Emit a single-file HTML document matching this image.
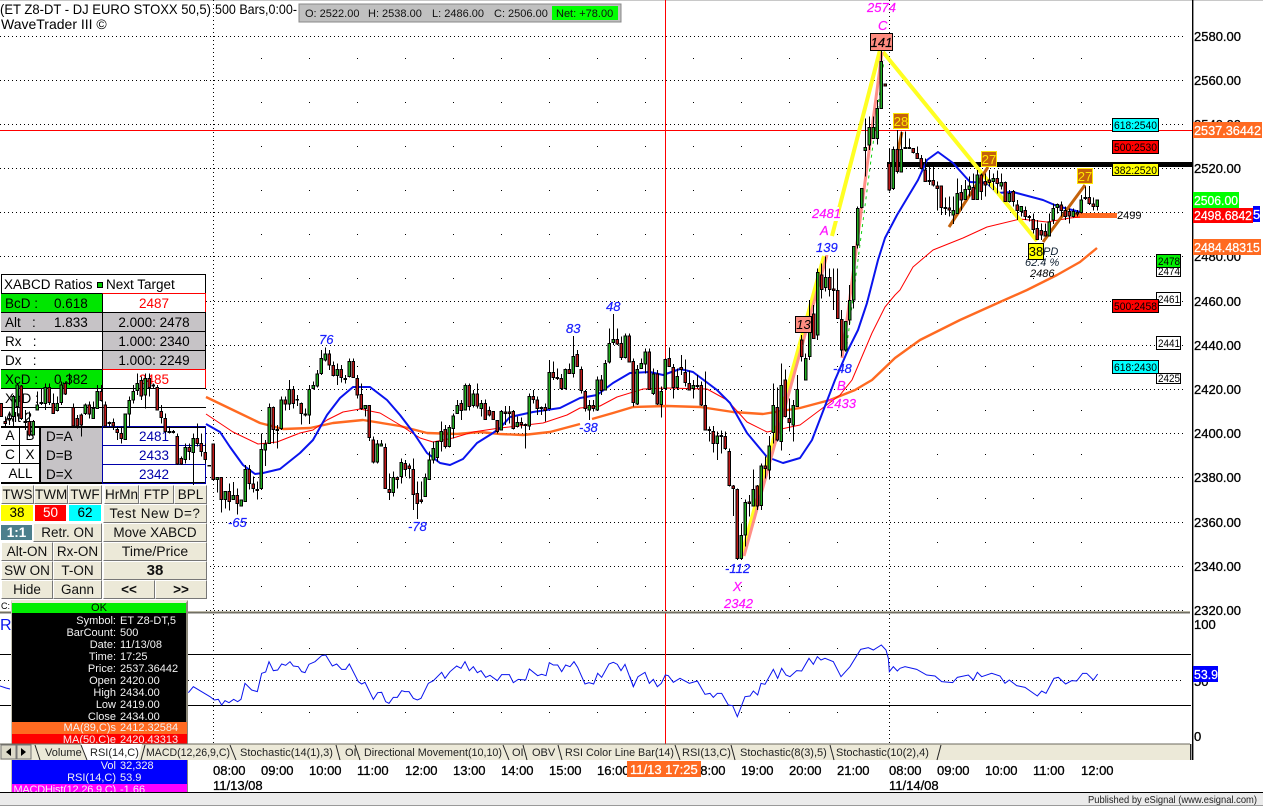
<!DOCTYPE html>
<html><head><meta charset="utf-8"><title>WaveTrader</title>
<style>
html,body{margin:0;padding:0;background:#fff;width:1263px;height:806px;overflow:hidden}
body{position:relative;font-family:"Liberation Sans",sans-serif;color:#000}
svg{position:absolute;left:0;top:0}
svg text{font-family:"Liberation Sans",sans-serif}
.a{position:absolute;white-space:nowrap;box-sizing:border-box}
.r{font-size:13.5px;height:20px;line-height:19px;border:1px solid #000;border-left:0;border-right:0}
.c{text-align:center}
.bt{position:absolute;box-sizing:border-box;background:#ece9d8;border:1px solid;border-color:#fff #777 #777 #fff;text-align:center;font-size:13.5px;line-height:17px;white-space:nowrap;overflow:hidden;color:#111}
.col{position:absolute;box-sizing:border-box;text-align:center;font-size:13.5px;line-height:16px}
.i{position:absolute;left:12px;width:175px;height:12px;font-size:11px;line-height:12px;color:#f2f2f2;white-space:nowrap}
.i s{text-decoration:none;position:absolute;right:71px}
.i u{text-decoration:none;position:absolute;left:108px}
.t{font-size:11px;fill:#222}
.ax{font-size:13px;fill:#000;stroke:#000;stroke-width:.3px}
.m{font-size:13px;font-style:italic;fill:#ff10ff;stroke:#ff10ff;stroke-width:.2px}
.b{font-size:13px;font-style:italic;fill:#1a20ff;stroke:#1a20ff;stroke-width:.2px}
.k{font-size:11px;fill:#000}
</style></head><body>

<!-- XABCD panel rows beneath the chart -->
<div class="a" style="left:1px;top:274px;width:205px;height:20px;border:1px solid #000;border-bottom:0;font-size:13.5px;line-height:20px;padding-left:2px">XABCD Ratios<span class="a" style="left:95px;top:7px;width:6px;height:6px;background:#0c0;border:1px solid #000"></span><span class="a" style="left:104px;top:0">Next Target</span></div>
<div class="a r" style="left:1px;top:293px;width:101px;background:#00e600;padding-left:4px">BcD :<span class="a" style="left:53px">0.618</span></div>
<div class="a r c" style="left:102px;top:293px;width:104px;color:#f00;border-color:#f00 #000 #000;border-left:1px solid #000;border-right:1px solid #f00">2487</div>
<div class="a r" style="left:1px;top:312px;width:101px;background:#c6c3c6;padding-left:4px">Alt &nbsp; :<span class="a" style="left:53px">1.833</span></div>
<div class="a r c" style="left:102px;top:312px;width:104px;background:#c6c3c6;border-left:1px solid #000;border-right:1px solid #000">2.000: 2478</div>
<div class="a r" style="left:1px;top:331px;width:101px;padding-left:4px">Rx &nbsp; :</div>
<div class="a r c" style="left:102px;top:331px;width:104px;background:#c6c3c6;border-left:1px solid #000;border-right:1px solid #000">1.000: 2340</div>
<div class="a r" style="left:1px;top:350px;width:101px;padding-left:4px">Dx &nbsp; :</div>
<div class="a r c" style="left:102px;top:350px;width:104px;background:#c6c3c6;border-left:1px solid #000;border-right:1px solid #000">1.000: 2249</div>
<div class="a r" style="left:1px;top:369px;width:101px;background:#00e600;padding-left:4px">XcD :<span class="a" style="left:53px">0.382</span></div>
<div class="a r c" style="left:102px;top:369px;width:104px;color:#f00;border-color:#f00 #000 #000;border-left:1px solid #000;border-right:1px solid #f00">2485</div>
<div class="a r" style="left:1px;top:388px;width:101px;padding-left:4px">XaD :</div>
<div class="a r" style="left:102px;top:388px;width:104px;border-left:1px solid #000"></div>
<div class="a r" style="left:1px;top:407px;width:101px;padding-left:4px">Alt 2</div>
<div class="a r" style="left:102px;top:407px;width:104px;border-left:1px solid #000"></div>
<div class="a" style="left:1px;top:426px;width:205px;height:58px;border-top:2px solid #000;border-bottom:2px solid #000"></div>
<div class="a" style="left:1px;top:426px;width:19px;height:20px;border-right:1px solid #000;border-bottom:1px solid #000;font-size:13.5px;line-height:20px;text-align:center">A</div>
<div class="a" style="left:20px;top:426px;width:20px;height:20px;border-bottom:1px solid #000;font-size:13.5px;line-height:20px;text-align:center">B</div>
<div class="a" style="left:1px;top:445px;width:19px;height:19px;border-right:1px solid #000;border-bottom:1px solid #000;font-size:13.5px;line-height:20px;text-align:center">C</div>
<div class="a" style="left:20px;top:445px;width:20px;height:19px;border-bottom:1px solid #000;font-size:13.5px;line-height:20px;text-align:center">X</div>
<div class="a" style="left:1px;top:464px;width:39px;height:19px;font-size:13.5px;line-height:20px;text-align:center">ALL</div>
<div class="a" style="left:39px;top:426px;width:63px;height:58px;background:#c6c3c6;border-left:2px solid #000;border-top:2px solid #000;border-bottom:2px solid #000;font-size:13.5px"><span class="a" style="left:5px;top:0;line-height:18px">D=A</span><span class="a" style="left:5px;top:19px;line-height:18px">D=B</span><span class="a" style="left:5px;top:38px;line-height:18px">D=X</span></div>
<div class="a c" style="left:102px;top:426px;width:104px;height:20px;border:1px solid #00a;color:#00a;font-size:13.5px;line-height:19px">2481</div>
<div class="a c" style="left:102px;top:445px;width:104px;height:20px;border:1px solid #00a;color:#00a;font-size:13.5px;line-height:19px">2433</div>
<div class="a c" style="left:102px;top:464px;width:104px;height:20px;border:1px solid #00a;color:#00a;font-size:13.5px;line-height:19px">2342</div>

<svg width="1263" height="806" viewBox="0 0 1263 806">
<rect x="0" y="0" width="1263" height="1" fill="#c8c8c8"/>
<!-- grid -->
<g fill="none" stroke="#000" shape-rendering="crispEdges">
<path stroke-dasharray="1 3" d="M206 36.5H1185M206 80.5H1185M206 124.5H1185M206 168.5H1185M206 212.5H1185M206 256.5H1185M206 301.5H1185M206 345.5H1185M206 389.5H1185M206 433.5H1185M206 477.5H1185M206 522.5H1185M206 566.5H1185M206 610.5H1185"/>
<path stroke-dasharray="1 3" d="M0 36.5H206M0 80.5H206M0 124.5H206M0 168.5H206M0 212.5H206M0 256.5H206"/>
<path stroke-dasharray="1 43" d="M261.5 58V600M309.5 58V600M357.5 58V600M405.5 58V600M453.5 58V600M501.5 58V600M549.5 58V600M597.5 58V600M645.5 58V600M693.5 58V600M741.5 58V600M789.5 58V600M837.5 58V600M937.5 58V600M985.5 58V600M1033.5 58V600M1081.5 58V600"/>
<path stroke-dasharray="1 3" d="M213.5 0V610M889.5 0V610M213.5 614V743M889.5 614V743"/>
<path stroke-dasharray="1 63" d="M261.5 648V720M309.5 648V720M357.5 648V720M405.5 648V720M453.5 648V720M501.5 648V720M549.5 648V720M597.5 648V720M645.5 648V720M693.5 648V720M741.5 648V720M789.5 648V720M837.5 648V720M937.5 648V720M985.5 648V720M1033.5 648V720M1081.5 648V720"/>
<path stroke-dasharray="1 3" d="M0 680.5H1183"/>
<path d="M0 654.5H1191M0 705.5H1191"/>
<path stroke="#f00" d="M665.5 0V745M0 130.5H1192"/>
</g>
<!-- thick target lines -->
<rect x="887" y="162" width="305" height="5" fill="#000"/>
<rect x="1075" y="213" width="42" height="5" fill="#ff6a21"/>
<!-- moving averages -->
<g fill="none" stroke-linejoin="round">
<polyline stroke="#ff6a21" stroke-width="2.4" points="206,397 233,410 260,423 283,429 310,428 333,423 363,420 400,426 427,433 457,434 480,432 500,434 523,435 550,432 580,424"/>
<polyline stroke="#ff6a21" stroke-width="2.4" points="592,419 613,413 633,407 667,406 700,407 733,412 763,414 800,408 830,400 855,390 872,380 895,358 920,340 960,320 1000,302 1027,290 1057,275 1080,262 1097,248"/>
<polyline stroke="#f00" stroke-width="1" points="206,414 233,432 258,444 277,442 300,433 313,430 327,420 343,412 360,409 380,413 400,425 420,438 433,442 453,438 473,432 493,429 500,428 543,423 567,415 580,408 600,406 617,397 643,389 667,388 707,389 727,400 747,422 767,432 800,425 820,410 840,395 852,380 872,333 885,307 895,295 900,290 913,267 933,250 963,238 987,227 1020,219 1047,222 1070,218 1080,217"/>
<polyline stroke="#0a14ee" stroke-width="2" points="206,424 220,432 230,447 243,465 255,474 263,473 280,469 300,453 313,440 327,415 340,398 353,387 370,387 387,400 400,415 413,432 427,453 440,463 450,465 463,459 477,443 493,433 500,428 510,417 533,412 560,408 580,398 597,395 613,383 630,373 650,372 663,375 680,369 693,372 717,390 730,403 747,433 767,457 783,463 800,458 812,440 835,380 848,350 858,330 867,303 878,260 885,238 897,215 918,180 927,160 938,152 953,163 970,182 987,183 997,193 1013,192 1043,200 1057,206 1080,212"/>
</g>
<!-- XABCD pattern -->
<g fill="none">
<path stroke="#ffff22" stroke-width="4" d="M741 558L824 256M832 236L880 50M883 52L1037 241"/>
<path stroke="#ff9088" stroke-width="3" d="M744 556L827 255M842 358L882 52"/>
<path stroke="#10d010" stroke-width="1" stroke-dasharray="3 4" d="M846 352L884 60"/>
<path stroke="#c4620c" stroke-width="3" d="M898 150L902 132M949 227L988 167M1043 242L1085 185"/>
</g>

<!-- candles: wicks then bodies -->
<g shape-rendering="crispEdges" stroke="#000" stroke-width="3">
<g transform="translate(0,270) scale(.33333)">
<path fill="none" d="M4 400V440M16 440V470M28 425V465M40 375V470M52 340V440M64 345V450M76 420V480M88 425V500M100 450V495M112 365V420M124 355V405M136 340V420M148 340V405M160 370V430M172 380V425M184 335V405M196 335V375M208 310V345M220 400V470M232 435V475M244 430V500M256 400V435M268 395V445M280 395V445M292 345V415M304 345V395M316 395V470M328 455V470M340 445V480M352 470V510M364 470V520M376 430V510M388 380V470M400 345V400M412 310V375M424 320V390M436 310V415M448 310V380M460 340V355M472 345V420M484 405V460M496 430V490M508 470V490M520 480V490M532 490V585M544 560V585M556 520V580M568 520V570M580 490V650M592 460V530M604 490V560M616 520V580"/>
<path fill="#22b022" d="M36 380h8V440h-8zM48 345h8V410h-8zM96 455h8V495h-8zM108 405h8V420h-8zM132 352h8V400h-8zM168 400h8V422h-8zM180 345h8V398h-8zM252 405h8V430h-8zM276 415h8V445h-8zM288 365h8V415h-8zM372 432h8V508h-8zM384 392h8V432h-8zM396 365h8V390h-8zM408 340h8V362h-8zM432 325h8V375h-8zM552 532h8V568h-8zM576 505h8V548h-8z"/>
<path fill="#c01818" d="M0 400h8V440h-8zM12 455h8V460h-8zM24 445h8V450h-8zM60 348h8V445h-8zM72 455h8V458h-8zM84 455h8V495h-8zM120 398h8V400h-8zM144 352h8V398h-8zM156 400h8V430h-8zM192 340h8V372h-8zM216 412h8V468h-8zM228 445h8V468h-8zM240 435h8V465h-8zM264 405h8V432h-8zM300 365h8V392h-8zM312 405h8V468h-8zM324 458h8V460h-8zM336 458h8V468h-8zM348 478h8V488h-8zM360 490h8V505h-8zM420 332h8V378h-8zM444 325h8V352h-8zM456 345h8V348h-8zM468 352h8V420h-8zM480 425h8V442h-8zM492 445h8V485h-8zM504 484h8V487h-8zM516 484h8V487h-8zM528 500h8V582h-8zM540 565h8V582h-8zM564 532h8V545h-8zM588 505h8V520h-8zM600 520h8V545h-8zM612 548h8V568h-8z"/>
</g>
<g transform="translate(200,300) scale(.33333)">
<path fill="none" d="M28 495V500M40 432V540M52 532V578M64 532V638M76 574V625M88 550V632M100 546V600M112 566V643M124 600V618M136 495V605M148 495V568M160 530V578M172 545V598M184 400V570M196 420V498M208 310V432M220 320V430M232 375V445M244 290V390M256 290V332M268 240V330M280 258V325M292 285V318M304 308V373M316 325V350M328 255V372M340 245V268M352 210V262M364 150V225M376 142V185M388 150V210M400 185V230M412 190V255M424 195V248M436 225V250M448 175V232M460 175V232M472 225V295M484 250V330M496 315V350M508 315V423M520 410V490M532 420V490M544 420V440M556 430V565M568 520V600M580 515V590M592 530V565M604 475V550M616 480V530M628 490V535M640 475V630M652 545V657M664 545V610M676 520V590M688 455V540M700 425V490M712 425V485M724 365V455M736 375V445M748 375V442M760 340V415M772 300V340M784 300V360M796 250V332M808 250V332M820 270V322M832 250V325M844 300V350M856 298V360M868 320V350M880 335V360M892 360V400"/>
<path fill="#22b022" d="M48 532h8V538h-8zM72 574h8V598h-8zM96 586h8V598h-8zM120 600h8V618h-8zM132 508h8V604h-8zM180 448h8V566h-8zM192 432h8V450h-8zM204 322h8V430h-8zM240 300h8V385h-8zM264 268h8V312h-8zM324 268h8V345h-8zM336 256h8V266h-8zM348 222h8V258h-8zM360 175h8V220h-8zM372 162h8V180h-8zM408 208h8V226h-8zM444 184h8V230h-8zM492 316h8V326h-8zM528 432h8V486h-8zM540 432h8V438h-8zM576 532h8V578h-8zM600 487h8V530h-8zM672 532h8V590h-8zM684 480h8V538h-8zM696 445h8V480h-8zM708 425h8V472h-8zM720 395h8V425h-8zM744 382h8V440h-8zM756 348h8V385h-8zM768 316h8V340h-8zM792 256h8V330h-8zM816 282h8V316h-8zM840 310h8V325h-8z"/>
<path fill="#c01818" d="M24 497h8V498h-8zM36 432h8V538h-8zM60 532h8V598h-8zM84 574h8V604h-8zM108 586h8V610h-8zM144 508h8V550h-8zM156 552h8V566h-8zM168 568h8V571h-8zM216 322h8V388h-8zM228 388h8V392h-8zM252 300h8V312h-8zM276 268h8V310h-8zM288 298h8V300h-8zM300 310h8V340h-8zM312 342h8V345h-8zM384 162h8V195h-8zM396 196h8V226h-8zM420 208h8V232h-8zM432 235h8V238h-8zM456 184h8V232h-8zM468 235h8V285h-8zM480 283h8V326h-8zM504 316h8V412h-8zM516 420h8V486h-8zM552 442h8V565h-8zM564 568h8V578h-8zM588 532h8V538h-8zM612 490h8V508h-8zM624 498h8V505h-8zM636 508h8V584h-8zM648 580h8V610h-8zM660 600h8V604h-8zM732 388h8V440h-8zM780 310h8V332h-8zM804 256h8V320h-8zM828 282h8V318h-8zM852 310h8V358h-8zM864 332h8V345h-8zM876 335h8V358h-8zM888 362h8V395h-8z"/>
</g>
<g transform="translate(500,300) scale(.33333)">
<path fill="none" d="M4 330V390M16 318V375M28 318V370M40 330V388M52 350V382M64 352V385M76 370V445M88 280V390M100 270V310M112 290V345M124 320V345M136 310V365M148 180V325M160 185V240M172 205V240M184 222V270M196 205V268M208 190V220M220 108V232M232 150V200M244 200V280M256 270V335M268 300V360M280 300V335M292 230V330M304 225V285M316 180V270M328 85V190M340 42V135M352 85V135M364 110V180M376 100V175M388 100V188M400 175V320M412 195V315M424 175V205M436 145V220M448 145V270M460 205V285M472 210V315M484 260V352M496 175V270M508 142V200M520 192V295M532 205V270M544 165V225M556 178V260M568 212V272M580 240V295M592 225V265M604 245V318M616 215V392M628 380V425M640 378V458M652 395V480M664 392V460M676 395V450M688 445V560M700 555V648M712 565V780M724 670V780M736 598V740M748 585V650M760 508V618M772 555V630M784 490V630M796 470V535M808 408V538M820 250V430M832 262V425M844 190V452M856 208V352M868 295V395M880 300V425M892 225V320"/>
<path fill="#22b022" d="M0 335h8V390h-8zM48 367h8V380h-8zM84 290h8V378h-8zM144 217h8V325h-8zM192 208h8V265h-8zM216 170h8V220h-8zM264 316h8V330h-8zM288 240h8V330h-8zM312 190h8V270h-8zM324 130h8V186h-8zM336 118h8V128h-8zM372 108h8V172h-8zM408 208h8V312h-8zM420 190h8V205h-8zM432 156h8V192h-8zM456 222h8V280h-8zM480 274h8V314h-8zM492 178h8V265h-8zM528 230h8V262h-8zM576 256h8V265h-8zM648 408h8V430h-8zM720 706h8V775h-8zM732 608h8V705h-8zM756 568h8V618h-8zM780 498h8V616h-8zM804 438h8V510h-8zM816 316h8V398h-8zM840 256h8V425h-8zM876 316h8V375h-8zM888 268h8V320h-8z"/>
<path fill="#c01818" d="M12 336h8V340h-8zM24 336h8V340h-8zM36 335h8V385h-8zM60 367h8V374h-8zM72 373h8V377h-8zM96 290h8V298h-8zM108 300h8V326h-8zM120 322h8V325h-8zM132 322h8V332h-8zM156 217h8V232h-8zM168 232h8V235h-8zM180 235h8V266h-8zM204 208h8V220h-8zM228 163h8V200h-8zM240 208h8V272h-8zM252 275h8V325h-8zM276 316h8V325h-8zM300 240h8V272h-8zM348 118h8V132h-8zM360 130h8V172h-8zM384 108h8V186h-8zM396 184h8V308h-8zM444 156h8V268h-8zM468 222h8V312h-8zM504 175h8V200h-8zM516 202h8V262h-8zM540 202h8V208h-8zM552 217h8V248h-8zM564 250h8V270h-8zM588 256h8V260h-8zM600 256h8V315h-8zM612 316h8V390h-8zM624 388h8V392h-8zM636 394h8V430h-8zM660 406h8V410h-8zM672 410h8V445h-8zM684 455h8V556h-8zM696 558h8V565h-8zM708 568h8V775h-8zM744 606h8V610h-8zM768 558h8V618h-8zM792 498h8V505h-8zM828 322h8V420h-8zM852 240h8V350h-8zM864 355h8V368h-8z"/>
</g>
<g transform="translate(795,190) scale(.33333)">
<path fill="none" d="M20 435V515M32 490V570M44 330V510M56 345V445M68 235V450M80 220V325M92 200V305M104 235V320M116 235V360M128 235V385M140 360V500M152 395V485M164 285V405M176 170V355M188 50V175M200 0V55"/>
<path fill="#22b022" d="M28 505h8V570h-8zM40 405h8V500h-8zM64 248h8V435h-8zM88 262h8V292h-8zM148 395h8V480h-8zM160 332h8V390h-8zM172 170h8V330h-8zM184 55h8V165h-8zM196 -5h8V52h-8z"/>
<path fill="#c01818" d="M16 450h8V500h-8zM52 372h8V445h-8zM76 255h8V298h-8zM100 262h8V298h-8zM112 297h8V302h-8zM124 302h8V385h-8zM136 388h8V480h-8z"/>
</g>
<g transform="translate(780,0) scale(.33333)">
<path fill="none" d="M256 355V530M268 350V450M280 350V415M292 300V433M304 150V325M316 252V258M328 445V575M340 440V570M352 390V520M364 395V518M376 395V445M388 415V445M400 445V460M412 440V475M424 465V508M436 475V545M448 495V555M460 495V560M472 545V632M484 558V645M496 592V645M508 590V650M520 590V672M532 535V640M544 555V632M556 540V600M568 530V590M580 520V600M592 510V600M604 520V600M616 520V590M628 510V560M640 520V570M652 512V580M664 520V568M676 545V605M688 570V608M700 570V620M712 600V660M724 620V650M736 620V660M748 645V665M760 640V700M772 660V720M784 670V720M796 670V708M808 640V710M820 610V672M832 610V640M844 605V650M856 620V660M868 625V670M880 625V652M892 630V650M904 585V640M916 560V600M928 558V615M940 592V632M952 598V632"/>
<path fill="#22b022" d="M252 442h8V452h-8zM264 382h8V435h-8zM276 382h8V415h-8zM288 325h8V415h-8zM300 185h8V325h-8zM336 448h8V565h-8zM360 448h8V516h-8zM516 632h8V645h-8zM528 580h8V640h-8zM552 568h8V598h-8zM564 558h8V568h-8zM588 525h8V598h-8zM636 535h8V545h-8zM660 548h8V558h-8zM684 580h8V605h-8zM720 620h8V635h-8zM804 666h8V708h-8zM816 625h8V660h-8zM828 614h8V622h-8zM876 635h8V650h-8zM900 600h8V638h-8zM948 600h8V620h-8z"/>
<path fill="#c01818" d="M312 252h8V258h-8zM324 490h8V570h-8zM348 448h8V515h-8zM372 442h8V445h-8zM384 442h8V445h-8zM396 445h8V458h-8zM408 460h8V475h-8zM420 475h8V505h-8zM432 510h8V545h-8zM444 542h8V545h-8zM456 542h8V555h-8zM468 558h8V565h-8zM480 558h8V622h-8zM492 622h8V626h-8zM504 624h8V630h-8zM540 578h8V600h-8zM576 562h8V598h-8zM600 525h8V575h-8zM612 545h8V555h-8zM624 540h8V548h-8zM648 535h8V550h-8zM672 548h8V605h-8zM696 574h8V605h-8zM708 615h8V632h-8zM732 632h8V650h-8zM744 650h8V653h-8zM756 658h8V688h-8zM768 685h8V718h-8zM780 692h8V705h-8zM792 694h8V708h-8zM840 615h8V632h-8zM852 632h8V650h-8zM864 635h8V648h-8zM888 638h8V642h-8zM912 592h8V596h-8zM924 592h8V610h-8zM936 612h8V620h-8z"/>
</g>
</g>

<!-- RSI line -->
<g fill="none" stroke="#0a14ee" stroke-width="1">
<polyline points="0,686 6,688 10,689"/>
<polyline transform="translate(185,640) scale(.33333)" stroke-width="3" points="10,158 25,140 50,155 75,170 88,180 100,178 110,195 120,182 132,188 146,178 158,185 168,178 180,130 200,150 217,155 230,100 242,96 252,65 265,92 278,90 290,72 302,76 315,65 325,78 340,80 350,95 360,98 372,73 390,65 410,47 422,45 442,78 455,72 470,88 482,88 493,72 520,125 530,132 540,127 565,178 578,158 590,157 602,185 612,190 625,172 637,172 650,152 660,155 672,155 685,175 697,180 708,175 730,130 745,122 770,97 780,115 795,95 815,78 828,85 840,65 853,92 865,80 877,98 888,92 902,112 915,106 937,122 950,104 973,104 985,128 1000,118 1022,120 1033,87 1058,107 1070,103 1083,107 1093,68 1105,75 1118,75 1130,95 1142,75 1155,80 1167,65 1178,82 1200,132 1212,128 1226,132 1238,100 1250,112 1272,72 1285,67 1297,73 1308,92 1320,73 1345,140 1350,130"/>
<polyline transform="translate(630,635) scale(.33333)" stroke-width="3" points="0,125 10,155 24,125 45,112 58,145 70,133 82,155 94,145 106,120 115,122 130,142 150,130 178,145 202,138 225,178 240,175 250,187 262,175 275,175 295,210 308,212 322,245 345,185 360,183 370,168 383,180 393,145 405,148 430,103 443,130 455,100 468,120 480,125 500,107 515,108 537,70 550,88 562,65 573,75 585,70 610,80 633,125 660,95 692,43 715,38 730,45 754,30 768,45 775,70 778,110 790,95 802,108 810,100"/>
<polyline transform="translate(900,600) scale(.33333)" stroke-width="3" points="0,205 15,200 50,208 80,225 105,228 125,245 158,248 172,232 205,225 220,240 232,217 245,230 275,220 300,228 315,250 328,240 350,257 375,262 412,288 425,273 438,280 462,235 475,232 497,252 515,242 530,243 548,220 560,220 580,240 593,222"/>
</g>
<rect x="0" y="611" width="1190" height="1" fill="#bdb9a8"/><rect x="0" y="612" width="1190" height="1.5" fill="#716f64"/>

<!-- chart labels -->
<rect x="811" y="207" width="28" height="14" fill="#fff"/><rect x="819" y="224" width="11" height="13" fill="#fff"/><rect x="815" y="242" width="22" height="13" fill="#fff"/>
<text x="867" y="12" class="m">2574</text><text x="878" y="30" class="m">C</text>
<text x="812" y="218" class="m">2481</text><text x="820" y="235" class="m">A</text>
<text x="816" y="252" class="b">139</text>
<text x="833" y="373" class="b">-48</text>
<text x="837" y="390" class="m">B</text><text x="827" y="408" class="m">2433</text>
<text x="579" y="432" class="b">-38</text>
<text x="606" y="311" class="b">48</text><text x="566" y="333" class="b">83</text><text x="319" y="344" class="b">76</text>
<text x="228" y="527" class="b">-65</text><text x="408" y="531" class="b">-78</text>
<text x="725" y="573" class="b">-112</text>
<text x="733" y="591" class="m">X</text><text x="724" y="608" class="m">2342</text>
<text x="1043" y="255" style="font-size:11px;font-style:italic" fill="#123">PD</text>
<text x="1025" y="266" style="font-size:11px;font-style:italic" fill="#123">62.4 %</text>
<text x="1030" y="277" style="font-size:11px;font-style:italic" fill="#000">2486</text>

<!-- wave boxes -->
<g text-anchor="middle" style="font-size:13px">
<rect x="870.5" y="33.5" width="22" height="17" fill="#ff8c80" stroke="#000"/><text x="881.5" y="47" font-style="italic" stroke="#000" stroke-width=".2">141</text>
<rect x="795.5" y="316.5" width="16" height="16" fill="#ff8c80" stroke="#000"/><text x="803.5" y="329" font-style="italic">13</text>
<rect x="893.5" y="113.5" width="15" height="15" fill="#c4620c" stroke="#ffe800"/><text x="901" y="126" fill="#ffe800">28</text>
<rect x="981.5" y="151.5" width="15" height="15" fill="#c4620c" stroke="#ffe800"/><text x="989" y="164" fill="#ffe800">27</text>
<rect x="1077.5" y="168.5" width="15" height="15" fill="#c4620c" stroke="#ffe800"/><text x="1085" y="181" fill="#ffe800">27</text>
<rect x="1028.5" y="243.5" width="15" height="16" fill="#ffff00" stroke="#000"/><text x="1036" y="256" fill="#000">38</text>
</g>

<!-- right axis -->
<rect x="1192" y="0" width="1.4" height="760" fill="#000"/>
<g class="ax">
<text x="1194" y="41" class="ax">2580.00</text><text x="1194" y="85" class="ax">2560.00</text><text x="1194" y="129" class="ax">2540.00</text><text x="1194" y="173" class="ax">2520.00</text><text x="1194" y="261" class="ax">2480.00</text><text x="1194" y="306" class="ax">2460.00</text><text x="1194" y="350" class="ax">2440.00</text><text x="1194" y="394" class="ax">2420.00</text><text x="1194" y="438" class="ax">2400.00</text><text x="1194" y="482" class="ax">2380.00</text><text x="1194" y="527" class="ax">2360.00</text><text x="1194" y="571" class="ax">2340.00</text><text x="1194" y="615" class="ax">2320.00</text>
<text x="1194" y="629" class="ax">100</text><text x="1194" y="686" class="ax">50</text><text x="1194" y="741" class="ax">0</text>
</g>
<g style="font-size:13px" fill="#fff" stroke="#fff" stroke-width=".25">
<rect x="1193" y="122" width="69" height="16" fill="#ff6a21" stroke="none"/><text x="1194" y="135" textLength="67" lengthAdjust="spacingAndGlyphs">2537.36442</text>
<rect x="1193" y="192" width="46" height="16" fill="#00ff00" stroke="none"/><text x="1194" y="205" textLength="44" lengthAdjust="spacingAndGlyphs">2506.00</text>
<rect x="1253" y="206" width="7" height="16" fill="#0000ff" stroke="none"/><text x="1253" y="219">5</text>
<rect x="1193" y="208" width="60" height="15" fill="#ff0000" stroke="none"/><text x="1194" y="220" textLength="58" lengthAdjust="spacingAndGlyphs">2498.6842</text>
<rect x="1193" y="239" width="68" height="16" fill="#ff6a21" stroke="none"/><text x="1194" y="252" textLength="66" lengthAdjust="spacingAndGlyphs">2484.48315</text>
<rect x="1193" y="666" width="25" height="16" fill="#0000ff" stroke="none"/><text x="1194" y="679" textLength="24" lengthAdjust="spacingAndGlyphs">53.9</text>
</g>
<!-- fib boxes -->
<g stroke="#000" shape-rendering="crispEdges">
<rect x="1112.5" y="118.5" width="46" height="13" fill="#00ffff"/>
<rect x="1112.5" y="140.5" width="46" height="13" fill="#ff0000"/>
<rect x="1112.5" y="163.5" width="46" height="12" fill="#ffff00"/>
<rect x="1156.5" y="254.5" width="24" height="13" fill="#00ee00"/>
<rect x="1156.5" y="267.5" width="24" height="9" fill="#fff"/>
<rect x="1156.5" y="292.5" width="24" height="13" fill="#fff"/>
<rect x="1112.5" y="299.5" width="46" height="13" fill="#ff0000"/>
<rect x="1156.5" y="336.5" width="24" height="13" fill="#fff"/>
<rect x="1112.5" y="360.5" width="46" height="13" fill="#00ffff"/>
<rect x="1156.5" y="373.5" width="24" height="10" fill="#fff"/>
</g>
<g class="k">
<text x="1114" y="129" class="k" textLength="43" lengthAdjust="spacingAndGlyphs">618:2540</text><text x="1114" y="151" class="k" textLength="43" lengthAdjust="spacingAndGlyphs">500:2530</text><text x="1114" y="174" class="k" textLength="43" lengthAdjust="spacingAndGlyphs">382:2520</text>
<text x="1117" y="219" class="k">2499</text>
<text x="1158" y="265" class="k" textLength="22" lengthAdjust="spacingAndGlyphs">2478</text><text x="1158" y="275" class="k" textLength="22" lengthAdjust="spacingAndGlyphs">2474</text><text x="1158" y="303" class="k" textLength="22" lengthAdjust="spacingAndGlyphs">2461</text>
<text x="1114" y="310" class="k" textLength="43" lengthAdjust="spacingAndGlyphs">500:2458</text><text x="1158" y="347" class="k" textLength="22" lengthAdjust="spacingAndGlyphs">2441</text><text x="1114" y="371" class="k" textLength="43" lengthAdjust="spacingAndGlyphs">618:2430</text><text x="1158" y="382" class="k" textLength="22" lengthAdjust="spacingAndGlyphs">2425</text>
</g>
<!-- title -->
<text x="0" y="14" style="font-size:14px" textLength="211" lengthAdjust="spacingAndGlyphs">(ET Z8-DT - DJ EURO STOXX 50,5)</text>
<text x="215" y="14" style="font-size:14px" textLength="82" lengthAdjust="spacingAndGlyphs">500 Bars,0:00-</text>
<text x="1" y="29" style="font-size:14px">WaveTrader III ©</text>
<rect x="299" y="4" width="322" height="18" fill="#c0c0c0" stroke="#888"/>
<rect x="552" y="6" width="66" height="14" fill="#00ff00"/>
<g style="font-size:11px" fill="#111">
<text x="305" y="17">O: 2522.00</text><text x="368" y="17">H: 2538.00</text><text x="432" y="17">L: 2486.00</text><text x="494" y="17">C: 2506.00</text><text x="556" y="17">Net: +78.00</text>
</g>
<!-- bottom area -->
<rect x="0" y="760" width="1263" height="32" fill="#fff"/>
<g class="ax">
<text x="213" y="775" class="ax">08:00</text><text x="261" y="775" class="ax">09:00</text><text x="309" y="775" class="ax">10:00</text><text x="357" y="775" class="ax">11:00</text><text x="405" y="775" class="ax">12:00</text><text x="453" y="775" class="ax">13:00</text><text x="501" y="775" class="ax">14:00</text><text x="549" y="775" class="ax">15:00</text><text x="597" y="775" class="ax">16:00</text><text x="693" y="775" class="ax">18:00</text><text x="741" y="775" class="ax">19:00</text><text x="789" y="775" class="ax">20:00</text><text x="837" y="775" class="ax">21:00</text><text x="889" y="775" class="ax">08:00</text><text x="937" y="775" class="ax">09:00</text><text x="985" y="775" class="ax">10:00</text><text x="1033" y="775" class="ax">11:00</text><text x="1081" y="775" class="ax">12:00</text>
<text x="213" y="790" class="ax">11/13/08</text><text x="889" y="790" class="ax">11/14/08</text>
</g>
<rect x="627" y="761" width="74" height="16" fill="#ff6a21"/>
<text x="630" y="774" style="font-size:13px" fill="#fff" stroke="#fff" stroke-width=".25">11/13 17:25</text>
<rect x="0" y="792" width="1263" height="1" fill="#000"/>
<rect x="0" y="793" width="1263" height="12" fill="#ebebeb"/>
<rect x="0" y="805" width="1263" height="1" fill="#999"/>
<text x="1088" y="803" style="font-size:10.5px" fill="#222" textLength="169" lengthAdjust="spacingAndGlyphs">Published by eSignal (www.esignal.com)</text>
<text x="1" y="609" style="font-size:9px">C:</text>
<text x="0" y="630" style="font-size:16px" fill="#0a14ee">R</text>
</svg>

<!-- buttons on top -->
<div class="bt" style="left:1px;top:485px;width:33px;height:19px">TWS</div>
<div class="bt" style="left:34px;top:485px;width:34px;height:19px">TWM</div>
<div class="bt" style="left:68px;top:485px;width:34px;height:19px">TWF</div>
<div class="bt" style="left:104px;top:485px;width:35px;height:19px">HrMn</div>
<div class="bt" style="left:139px;top:485px;width:35px;height:19px">FTP</div>
<div class="bt" style="left:174px;top:485px;width:33px;height:19px">BPL</div>
<div class="col" style="left:1px;top:505px;width:32px;height:16px;background:#ff0">38</div>
<div class="col" style="left:35px;top:505px;width:31px;height:16px;background:#f00;color:#fff">50</div>
<div class="col" style="left:69px;top:505px;width:32px;height:16px;background:#0ff">62</div>
<div class="bt" style="left:103px;top:504px;width:104px;height:19px;letter-spacing:.55px">Test New D=?</div>
<div class="col" style="left:1px;top:525px;width:31px;height:15px;line-height:15px;background:#4c7f8c;color:#fff;font-weight:bold">1:1</div>
<div class="bt" style="left:33px;top:523px;width:69px;height:19px">Retr. ON</div>
<div class="bt" style="left:103px;top:523px;width:104px;height:19px">Move XABCD</div>
<div class="bt" style="left:1px;top:542px;width:52px;height:19px">Alt-ON</div>
<div class="bt" style="left:53px;top:542px;width:49px;height:19px">Rx-ON</div>
<div class="bt" style="left:103px;top:542px;width:104px;height:19px;font-size:14px">Time/Price</div>
<div class="bt" style="left:1px;top:561px;width:52px;height:19px">SW ON</div>
<div class="bt" style="left:53px;top:561px;width:49px;height:19px">T-ON</div>
<div class="bt" style="left:103px;top:561px;width:104px;height:19px;font-weight:bold;font-size:15px">38</div>
<div class="bt" style="left:1px;top:580px;width:52px;height:19px">Hide</div>
<div class="bt" style="left:53px;top:580px;width:49px;height:19px">Gann</div>
<div class="bt" style="left:103px;top:580px;width:52px;height:19px;font-weight:bold">&lt;&lt;</div>
<div class="bt" style="left:155px;top:580px;width:52px;height:19px;font-weight:bold">&gt;&gt;</div>

<!-- info panel -->
<div class="a" style="left:11px;top:600px;width:177px;height:192px;background:#000;border-right:2px solid #8a8778;border-left:1px solid #c8c4b4;border-top:3px solid #ece9d8"></div>
<div class="a" style="left:12px;top:603px;width:174px;height:10px;background:#00ee00;font-size:11px;line-height:11px;text-align:center;overflow:hidden">OK</div>
<div class="i" style="top:615px"><s>Symbol:</s><u>ET Z8-DT,5</u></div>
<div class="i" style="top:627px"><s>BarCount:</s><u>500</u></div>
<div class="i" style="top:639px"><s>Date:</s><u>11/13/08</u></div>
<div class="i" style="top:651px"><s>Time:</s><u>17:25</u></div>
<div class="i" style="top:663px"><s>Price:</s><u>2537.36442</u></div>
<div class="i" style="top:675px"><s>Open</s><u>2420.00</u></div>
<div class="i" style="top:687px"><s>High</s><u>2434.00</u></div>
<div class="i" style="top:699px"><s>Low</s><u>2419.00</u></div>
<div class="i" style="top:711px"><s>Close</s><u>2434.00</u></div>
<div class="i" style="top:722px;background:#ff6a21"><s>MA(89,C)s</s><u>2412.32584</u></div>
<div class="i" style="top:734px;background:#f00"><s>MA(50,C)e</s><u>2420.43313</u></div>
<div class="i" style="top:760px;background:#00f"><s>Vol</s><u>32,328</u></div>
<div class="i" style="top:772px;background:#00f"><s>RSI(14,C)</s><u>53.9</u></div>
<div class="i" style="top:784px;height:8px;overflow:hidden;background:#f0f;line-height:12px"><s style="letter-spacing:-.2px">MACDHist(12,26,9,C)</s><u>-1.66</u></div>

<!-- tabs -->
<svg width="1263" height="806" viewBox="0 0 1263 806" style="pointer-events:none">
<rect x="0" y="744" width="1190" height="16" fill="#ece9d8"/>
<rect x="0" y="743.5" width="1190" height="1" fill="#6b695e"/>
<rect x="1190" y="744" width="1.4" height="16" fill="#222"/>
<polygon points="81,744 142,744 138,760 87,760" fill="#fff"/>
<rect x="938" y="745" width="252" height="15" fill="#ece9d8"/>
<rect x="1" y="745" width="15" height="14" fill="#dcd9c8" stroke="#777"/><rect x="17" y="745" width="14" height="14" fill="#dcd9c8" stroke="#777"/>
<polygon points="11,748 11,756 6,752" fill="#000"/><polygon points="21,748 21,756 26,752" fill="#000"/>
<g fill="none" stroke="#222" stroke-width="1">
<path d="M35 745L40 760M81 745L87 760M145 745L141 760M230 745L236 760M336 745L340 760M355 745L360 760M503 745L509 760M523 745L527 760M558 745L562 760M675 745L680 760M731 745L735 760M830 745L834 760M941 745L937 760"/>
</g>
<g class="t">
<text x="45" y="756" class="t">Volume</text><text x="90" y="756" class="t">RSI(14,C)</text><text x="146" y="756" class="t" textLength="84" lengthAdjust="spacingAndGlyphs">MACD(12,26,9,C)</text><text x="240" y="756" class="t">Stochastic(14(1),3)</text><text x="345" y="756" class="t">OI</text><text x="364" y="756" class="t" textLength="138" lengthAdjust="spacingAndGlyphs">Directional Movement(10,10)</text><text x="512" y="756" class="t">OI</text><text x="532" y="756" class="t">OBV</text><text x="565" y="756" class="t" textLength="109" lengthAdjust="spacingAndGlyphs">RSI Color Line Bar(14)</text><text x="682" y="756" class="t">RSI(13,C)</text><text x="740" y="756" class="t">Stochastic(8(3),5)</text><text x="836" y="756" class="t">Stochastic(10(2),4)</text>
</g>
</svg>
</body></html>
